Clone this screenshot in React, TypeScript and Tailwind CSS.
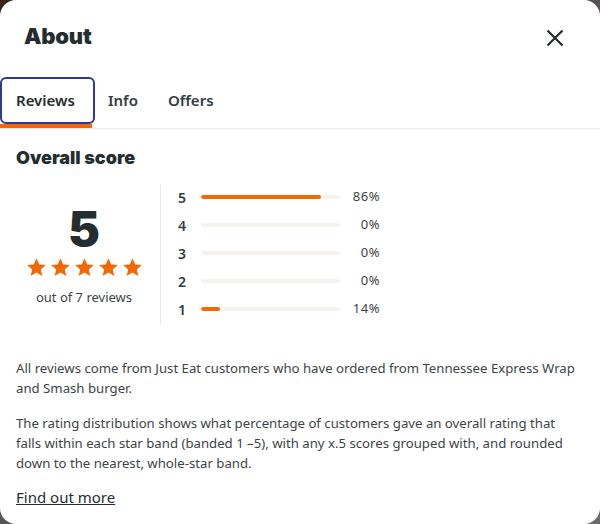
import React from 'react';

const ROWS: Array<{ star: number; pct: number }> = [
  { star: 5, pct: 86 },
  { star: 4, pct: 0 },
  { star: 3, pct: 0 },
  { star: 2, pct: 0 },
  { star: 1, pct: 14 },
];

function Star() {
  return (
    <svg width="21" height="21" viewBox="0 0 24 24" className="fill-[#f36805]">
      <path d="M12 1.5l3.1 7.1 7.6.6-5.8 5 1.8 7.5L12 17.7l-6.7 4 1.8-7.5-5.8-5 7.6-.6z" />
    </svg>
  );
}

export default function App(): JSX.Element {
  return (
    <div className="w-[600px] h-[524px] bg-gradient-to-br from-[#3a2417] via-[#575555] to-[#6a6a6a]">
      <div
        className="w-full h-full bg-white rounded-2xl overflow-hidden text-[#242e30]"
        style={{ fontFamily: '"Noto Sans", "Open Sans", sans-serif' }}
      >
        {/* header */}
        <div className="flex items-center justify-between pl-6 pr-9 pt-[6px] h-[76px] pb-[10px]">
          <h1 className="text-[22px] font-black tracking-[-0.2px]" style={{ fontFamily: 'Inter, sans-serif' }}>
            About
          </h1>
          <button className="text-[#242e30] mt-[4px]">
            <svg width="18" height="18" viewBox="0 0 18 18" fill="none" stroke="currentColor" strokeWidth="2.2">
              <path d="M1.5 1.5l15 15M16.5 1.5l-15 15" />
            </svg>
          </button>
        </div>

        {/* tabs */}
        <div className="flex items-end border-b border-[#ececec] h-[53px]">
          <div className="flex flex-col w-[95px]">
            <div className="h-[47px] border-2 border-[#2b3a98] rounded-md flex items-center pl-[14px] text-[15px] font-semibold">
              Reviews
            </div>
            <div className="h-[4px] w-[92px] bg-[#f36805]" />
          </div>
          <div className="h-[51px] flex items-center pl-[13px] pr-[30px] text-[15px] font-semibold text-[#303d3f] pb-[4px]">Info</div>
          <div className="h-[51px] flex items-center text-[15px] font-semibold text-[#303d3f] pb-[4px]">Offers</div>
        </div>

        <div className="px-4">
          <h2 className="text-[18px] font-black mt-[17px] leading-6" style={{ fontFamily: 'Inter, sans-serif' }}>
            Overall score
          </h2>

          <div className="flex mt-[15px]">
            <div className="w-[144px] pr-[8px] flex flex-col items-center pt-[20px]">
              <div className="text-[48px] leading-[48px] font-black" style={{ fontFamily: 'Inter, sans-serif' }}>5</div>
              <div className="flex gap-[3px] mt-[4px]">
                <Star />
                <Star />
                <Star />
                <Star />
                <Star />
              </div>
              <div className="text-[13px] text-[#3c4447] mt-[10px]">out of 7 reviews</div>
            </div>

            <div className="border-l border-[#e6e6e6] pl-[17px] h-[140px]">
              <div className="flex flex-col -mt-[2px]">
                {ROWS.map((r) => (
                  <div key={r.star} className="flex items-center h-[28px]">
                    <span className="w-[23px] text-[14px] font-semibold text-[#303d3f]">{r.star}</span>
                    <div className="w-[139px] h-[4px] rounded-full bg-[#f5f2ee] overflow-hidden">
                      <div className="h-full rounded-full bg-[#f36805]" style={{ width: `${r.pct}%` }} />
                    </div>
                    <span className="w-[40px] text-right text-[13px] text-[#3c4447] tracking-[0.5px]">{r.pct}%</span>
                  </div>
                ))}
              </div>
            </div>
          </div>

          <div className="mt-[33px] w-[564px] text-[13.2px] leading-5 text-[#3c4447]">
            <p>All reviews come from Just Eat customers who have ordered from Tennessee Express Wrap and Smash burger.</p>
            <p className="mt-[15px]">
              The rating distribution shows what percentage of customers gave an overall rating that falls within each star band (banded 1 –5), with any x.5 scores grouped with, and rounded down to the nearest, whole-star band.
            </p>
            <a className="block mt-[14px] text-[15px] underline text-[#242e30]">Find out more</a>
          </div>
        </div>
      </div>
    </div>
  );
}
